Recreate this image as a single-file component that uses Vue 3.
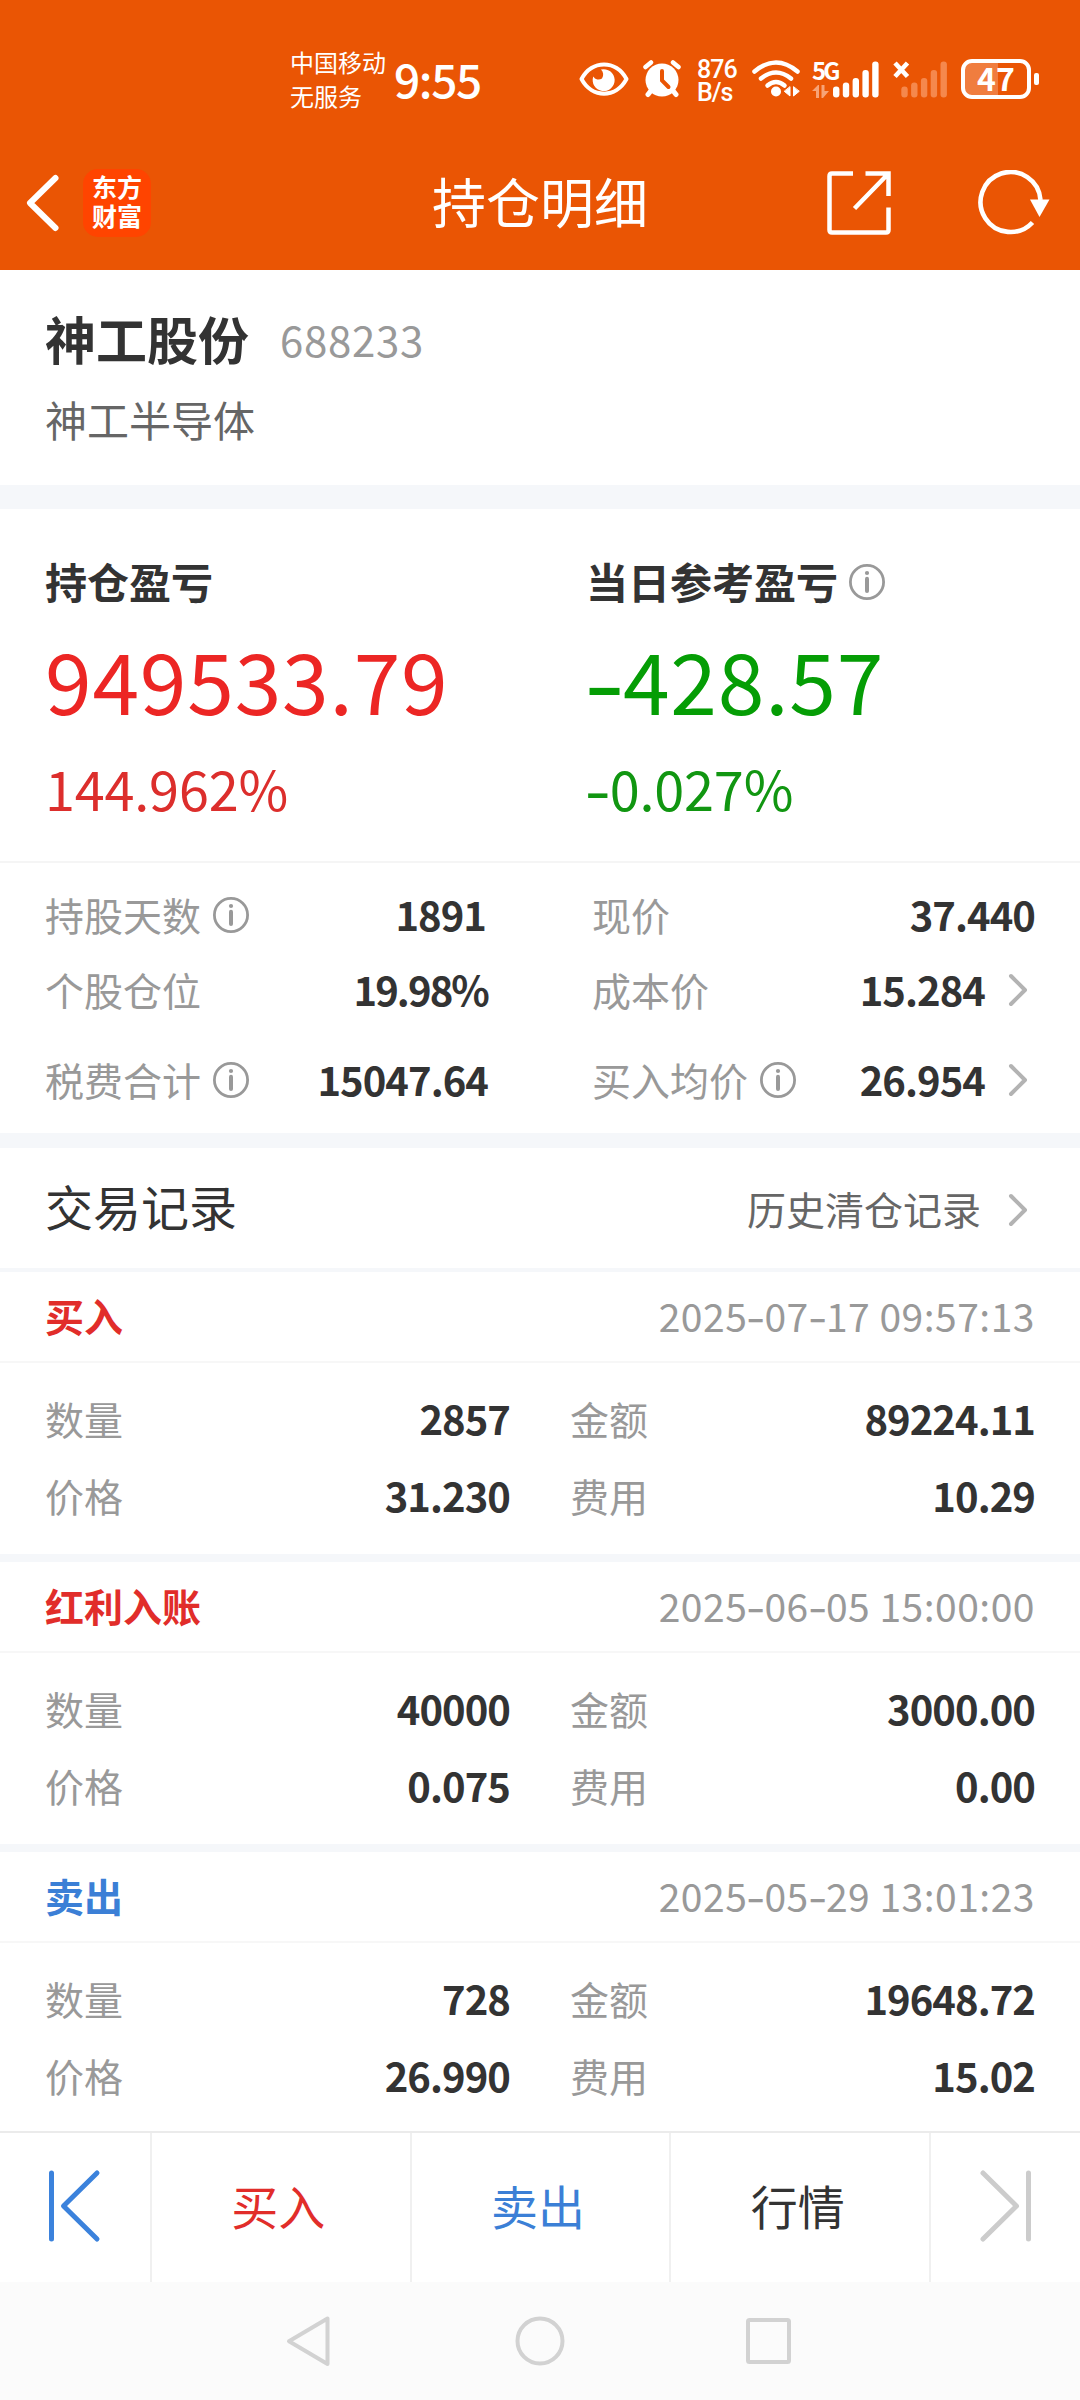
<script setup>
import { h } from 'vue'

const records = [
  { type: '买入', cls: 'red', time: '2025-07-17 09:57:13', qty: '2857', amount: '89224.11', price: '31.230', fee: '10.29' },
  { type: '红利入账', cls: 'red', time: '2025-06-05 15:00:00', qty: '40000', amount: '3000.00', price: '0.075', fee: '0.00' },
  { type: '卖出', cls: 'blue', time: '2025-05-29 13:01:23', qty: '728', amount: '19648.72', price: '26.990', fee: '15.02' },
]

// Numbers use a wide, thin minus sign
const Num = (props) =>
  h('span', { class: 'num' }, props.v.split(/(-)/).filter(Boolean).map((s) => (s === '-' ? h('i', { class: 'dash' }, s) : s)))
Num.props = ['v']

const Info = () =>
  h('svg', { class: 'info', width: 36, height: 36, viewBox: '0 0 36 36', fill: 'none', stroke: '#999', 'stroke-width': 2.8 }, [
    h('circle', { cx: 18, cy: 18, r: 16.6 }),
    h('path', { d: 'M18 14.8V27', 'stroke-width': 4, 'stroke-linecap': 'round' }),
    h('circle', { cx: 18, cy: 9, r: 2.1, fill: '#999', stroke: 'none' }),
  ])

const Chevron = () =>
  h('svg', { class: 'chev', width: 20, height: 34, viewBox: '0 0 20 34', fill: 'none', stroke: '#b3b3b3', 'stroke-width': 4, 'stroke-linecap': 'round', 'stroke-linejoin': 'round' }, [
    h('path', { d: 'M3 3L17 17L3 31' }),
  ])

const bars = [11, 15, 19.5, 27.5, 36]
</script>

<template>
  <div class="page">
    <header class="top">
      <div class="status">
        <div class="carrier"><span>中国移动</span><span>无服务</span></div>
        <div class="clock">9:55</div>
        <svg class="eye" width="50" height="34" viewBox="0 0 50 34">
          <path d="M2.5 17C13-2.5 37-2.5 47.5 17C37 36.500 13 36.500 2.500 17Z" fill="none" stroke="#fff" stroke-width="4" stroke-linejoin="round" />
          <path d="M22 7.500A11 11 0 1 1 14.300 14.500A6 6 0 0 0 23 16.500A7 7 0 0 0 22 7.500Z" fill="#fff" />
        </svg>
        <svg class="alarm" width="38" height="38" viewBox="0 0 38 38" fill="none" stroke="#fff">
          <circle cx="19" cy="20" r="16.500" fill="#fff" stroke="none" />
          <path d="M2.500 7L8 2.500M35.500 7L30 2.500" stroke-width="4.500" stroke-linecap="round" />
          <path d="M8.500 30L5 34.500M29.500 30L33 34.500" stroke-width="5" stroke-linecap="round" />
          <path d="M19 11V20.500L25.500 27" stroke="#ea5504" stroke-width="4" stroke-linecap="round" />
        </svg>
        <div class="speed"><span>876</span><span>B/s</span></div>
        <svg class="wifi" width="48" height="38" viewBox="0 0 48 38" fill="none" stroke="#fff" stroke-width="4.500" stroke-linecap="round">
          <path d="M2.500 11.500Q24-6.500 45.500 11.500" />
          <path d="M9 18.500Q24 6.500 39 18.500" />
          <path d="M15.500 25.500Q24 18.500 32.500 25.500" />
          <circle cx="24" cy="31.500" r="5" fill="#fff" stroke="none" />
          <path d="M38 27V36L32.500 31.500ZM41.500 27V36L47 31.500Z" fill="#fff" stroke="#fff" stroke-width="1" />
        </svg>
        <div class="gen">
          <span>5G</span>
          <svg width="18" height="13" viewBox="0 0 18 13" fill="#f7a377">
            <path d="M0 6L6 0H7V13H4V6ZM9.500 0H12.500V6H17L11 13H9.500Z" />
          </svg>
        </div>
        <svg class="bars" width="47" height="37" viewBox="0 0 47 37">
          <rect v-for="(b, i) in bars" :key="i" :x="i * 9.800" :y="36.500 - b" width="6.400" :height="b" rx="3" fill="#fff" />
        </svg>
        <svg class="nosim" width="55" height="37" viewBox="0 0 55 37">
          <path d="M2 2L14.500 15.500M14.500 2L2 15.500" stroke="#fff" stroke-width="4.600" />
          <rect v-for="(b, i) in bars" :key="i" :x="8.300 + i * 9.800" :y="36.500 - b" width="6.400" :height="b" rx="3" fill="#f5884d" />
        </svg>
        <div class="battery"><b>47</b></div>
        <i class="tip"></i>
      </div>
      <div class="titlebar">
        <svg class="back" width="36" height="60" viewBox="0 0 36 60" fill="none" stroke="#fff" stroke-width="6" stroke-linecap="round" stroke-linejoin="round">
          <path d="M30.500 5L5 30L30.500 55" />
        </svg>
        <div class="logo"><span>东方</span><span>财富</span></div>
        <h1>持仓明细</h1>
        <svg class="share" width="64" height="64" viewBox="0 0 64 64" fill="none" stroke="#fff" stroke-width="4.500">
          <path d="M26 2.500H5Q2.500 2.500 2.500 5V59Q2.500 61.500 5 61.500H59Q61.500 61.500 61.500 59V36.500" />
          <path d="M38.500 2.500H61.500V25M61 3L27.500 37.500" />
        </svg>
        <svg class="refresh" width="74" height="66" viewBox="0 0 74 66" fill="none" stroke="#fff" stroke-width="4.600">
          <path d="M55.500 52.500A30 30 0 1 1 63.500 30" />
          <path d="M53 29.500H72.500L62.500 47Z" fill="#fff" stroke="none" />
        </svg>
      </div>
    </header>

    <main class="content">
      <section class="stock">
        <div class="name"><b>神工股份</b><Num v="688233" /></div>
        <div class="full">神工半导体</div>
      </section>

      <section class="pnl">
        <div class="col total">
          <h2>持仓盈亏</h2>
          <div class="big"><Num v="949533.79" /></div>
          <div class="pct"><Num v="144.962%" /></div>
        </div>
        <div class="col day">
          <h2>当日参考盈亏<Info /></h2>
          <div class="big"><Num v="-428.57" /></div>
          <div class="pct"><Num v="-0.027%" /></div>
        </div>
      </section>

      <section class="details">
        <div class="row">
          <div class="cell l one"><label>持股天数<Info /></label><b>1891</b></div>
          <div class="cell r"><label>现价</label><b>37.440</b></div>
        </div>
        <div class="row">
          <div class="cell l ratio"><label>个股仓位</label><b>19.98%</b></div>
          <div class="cell r"><label>成本价</label><b>15.284</b><Chevron /></div>
        </div>
        <div class="row last">
          <div class="cell l"><label>税费合计<Info /></label><b>15047.64</b></div>
          <div class="cell r"><label>买入均价<Info /></label><b>26.954</b><Chevron /></div>
        </div>
      </section>

      <section class="trades">
        <div class="thead">
          <h3>交易记录</h3>
          <a>历史清仓记录</a><Chevron />
        </div>
        <article v-for="r in records" :key="r.time">
          <div class="rhead"><b :class="r.cls">{{ r.type }}</b><Num :v="r.time" /></div>
          <div class="rbody">
            <div class="line">
              <label>数量</label><b class="v1">{{ r.qty }}</b><label>金额</label><b class="v2">{{ r.amount }}</b>
            </div>
            <div class="line">
              <label>价格</label><b class="v1">{{ r.price }}</b><label>费用</label><b class="v2">{{ r.fee }}</b>
            </div>
          </div>
        </article>
      </section>
    </main>

    <footer class="actions">
      <div class="edge first">
        <svg width="54" height="76" viewBox="0 0 54 76" fill="none" stroke="#3b82dc" stroke-width="5" stroke-linecap="round" stroke-linejoin="round">
          <path d="M4.500 5V71M50 5L16.500 38L50 71" />
        </svg>
      </div>
      <div class="act red">买入</div>
      <div class="act blue">卖出</div>
      <div class="act">行情</div>
      <div class="edge">
        <svg width="54" height="76" viewBox="0 0 54 76" fill="none" stroke="#ccc" stroke-width="5" stroke-linecap="round" stroke-linejoin="round">
          <path d="M49.500 5V71M4 5L37.500 38L4 71" />
        </svg>
      </div>
    </footer>

    <nav class="sysnav">
      <svg width="506" height="52" viewBox="0 0 506 52" fill="none" stroke="#d2d2d2" stroke-width="4" stroke-linejoin="round">
        <path d="M41.500 3.500V49L3 26.200Z" />
        <circle cx="254" cy="26" r="22.500" />
        <rect x="462" y="5" width="41" height="42" rx="1.500" />
      </svg>
    </nav>
  </div>
</template>

<style>
body {
  margin: 0;
  background: #fff;
}
</style>

<style scoped>
.page {
  width: 1080px;
  height: 2400px;
  overflow: hidden;
  background: #fff;
  color: #333;
  font-family: "Noto Sans CJK SC", "Noto Sans", sans-serif;
}
.page :deep(*) {
  box-sizing: border-box;
}
svg {
  display: block;
  flex: none;
}
h1, h2, h3 {
  margin: 0;
}
.page :deep(.dash) {
  display: inline-block;
  width: 0.44em;
  font-style: normal;
  font-weight: 500;
  text-align: center;
  transform: scaleX(1.35);
  letter-spacing: 0;
}

.top {
  height: 270px;
  background: #ea5504;
  color: #fff;
}
.status {
  display: flex;
  align-items: center;
  height: 158px;
  padding-left: 290px;
}
.carrier {
  display: flex;
  flex-direction: column;
  width: 104px;
  font-size: 24px;
  line-height: 34px;
  white-space: nowrap;
  padding-bottom: 1px;
}
.clock {
  width: 185px;
  font-size: 46px;
  font-weight: 500;
  line-height: 60px;
  padding-bottom: 3px;
  letter-spacing: -1.4px;
}
.eye { margin-right: 14px; }
.alarm { margin-right: 16px; }
.speed {
  display: flex;
  flex-direction: column;
  width: 55px;
  font: 500 25px/23px Roboto, sans-serif;
  letter-spacing: -1px;
  padding-top: 3px;
}
.wifi { margin-right: 12px; }
.gen {
  width: 21px;
  height: 37px;
  display: flex;
  flex-direction: column;
  justify-content: space-between;
}
.gen span {
  font: 700 24px/17px "Noto Sans CJK SC", sans-serif;
  letter-spacing: -3px;
}
.bars { margin-right: 13px; }
.nosim { margin-right: 13px; }
.battery {
  width: 70px;
  height: 40px;
  flex: none;
  border: 4px solid #fff;
  border-radius: 11px;
  background: linear-gradient(90deg, #f07d3f 33px, transparent 33px);
  text-align: center;
}
.battery b {
  display: block;
  font: 700 32px/28px "Noto Sans CJK SC", sans-serif;
}
.tip {
  width: 5px;
  height: 12px;
  margin-left: 3px;
  border-radius: 2px;
  background: #fff;
}
.titlebar {
  display: flex;
  align-items: center;
  height: 89px;
  padding-left: 25px;
}
.logo {
  display: flex;
  flex-direction: column;
  align-items: center;
  justify-content: center;
  width: 68px;
  height: 68px;
  margin-left: 22px;
  border-radius: 15px;
  background: #ff4400;
  font-size: 25px;
  font-weight: 700;
  line-height: 29px;
  padding-bottom: 4px;
}
h1 {
  width: 220px;
  margin: 0 175px 0 281px;
  font-size: 54px;
  font-weight: 400;
  line-height: 80px;
  padding-bottom: 4px;
  white-space: nowrap;
}
.refresh { margin-left: 86px; }

.content {
  height: 1861px;
  overflow: hidden;
}
.stock {
  height: 239px;
  padding: 33px 45px 0;
  border-bottom: 24px solid #f5f7fa;
}
.name {
  display: flex;
  align-items: center;
  height: 70px;
  font-size: 51px;
}
.name :deep(.num) {
  margin-left: 31px;
  font-size: 42px;
  letter-spacing: 0.7px;
  color: #999;
}
.full {
  margin-top: 16px;
  font-size: 42px;
  line-height: 60px;
  color: #666;
}

.pnl {
  display: flex;
  height: 354px;
  padding: 41px 0 0 45px;
  border-bottom: 2px solid #f5f5f5;
}
.total { width: 541px; color: #ec2624; }
.day { color: #059d05; }
h2 {
  display: flex;
  align-items: center;
  height: 60px;
  font-size: 42px;
  font-weight: 700;
  color: #333;
}
h2 :deep(.info) { margin: 3px 0 0 11px; }
.big {
  margin-top: 19px;
  font-size: 84px;
  line-height: 100px;
  letter-spacing: 0.8px;
}
.pct {
  margin-top: 29px;
  font-size: 54px;
  line-height: 60px;
  letter-spacing: -0.2px;
}
.total .pct { color: #dc2e2c; }
.day .pct { color: #119611; }

.details {
  height: 285px;
  padding: 21px 45px 0;
  border-bottom: 15px solid #f5f7fa;
}
.row {
  display: flex;
  height: 60px;
  margin-bottom: 15px;
}
.row.last { margin-top: 30px; }
.cell {
  display: flex;
  align-items: center;
  font-size: 39px;
}
.cell.l { width: 443px; margin-right: 104px; }
.cell.one b { padding-right: 2px; }
.cell.r { flex: 1; }
label {
  display: flex;
  align-items: center;
  color: #999;
}
.cell label { flex: 1; }
.cell :deep(.info) { margin: 2px 0 0 12px; }
b { font-weight: 700; }
.cell b,
.line b {
  font-size: 40px;
  letter-spacing: -0.95px;
}
.cell.ratio b { letter-spacing: -1.9px; }
.cell :deep(.chev) { margin: 2px 7px 0 23px; }

.thead {
  display: flex;
  align-items: center;
  height: 124px;
  padding: 0 45px;
  border-bottom: 4px solid #f5f7fa;
}
h3 {
  flex: 1;
  font-size: 48px;
  font-weight: 400;
  padding-bottom: 6px;
}
.thead a {
  font-size: 39px;
  color: #666;
}
.thead :deep(.chev) { margin: 4px 7px 0 27px; }

article {
  height: 290px;
  border-bottom: 8px solid #f5f7fa;
}
.rhead {
  display: flex;
  align-items: center;
  justify-content: space-between;
  height: 91px;
  padding: 0 45px 4px;
  border-bottom: 2px solid #f7f7f7;
  font-size: 39px;
}
.rhead :deep(.num) {
  color: #999;
  letter-spacing: 0.5px;
}
.red { color: #e12d2a; }
.blue { color: #3b7fd6; }
.rbody { padding: 16px 45px 0; }
.line {
  display: flex;
  align-items: center;
  height: 77px;
  font-size: 39px;
}
.line b { text-align: right; }
.v1 { width: 387px; margin-right: 60px; }
.v2 { flex: 1; }

.actions {
  display: flex;
  height: 151px;
  border-top: 2px solid #ebebeb;
}
.edge {
  width: 151px;
  display: flex;
  align-items: center;
  justify-content: center;
  padding-bottom: 3px;
}
.edge.first {
  width: 150px;
  padding-right: 2px;
}
.act {
  flex: 1;
  border-left: 2px solid #f0f0f0;
  padding-right: 5px;
  text-align: center;
  font-size: 47px;
  line-height: 144px;
}
.act + .edge { border-left: 2px solid #f0f0f0; }
.sysnav {
  height: 118px;
  padding: 33px 0 0 286px;
  background: #fbfbfb;
}
</style>
